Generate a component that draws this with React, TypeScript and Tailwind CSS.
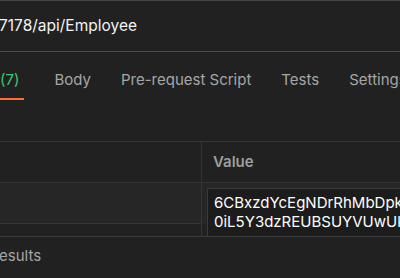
import React from 'react';

const tabs = ['Body', 'Pre-request Script', 'Tests', 'Settings'];

const App = () => {
  return (
    <div
      className="w-[400px] h-[278px] overflow-hidden bg-[#212121] border-t border-[#444444] flex flex-col"
      style={{ fontFamily: 'Inter, "Noto Sans", sans-serif' }}
    >
      {/* URL bar */}
      <div className="h-[50px] shrink-0 flex items-center whitespace-nowrap">
        <span className="text-[15.5px] text-[#f2f2f2] -ml-px">7178/api/Employee</span>
      </div>
      <div className="h-px shrink-0 bg-[#4d4d4d]" />

      {/* Request tabs */}
      <div className="h-[48px] shrink-0 flex items-stretch gap-[30px] whitespace-nowrap text-[15px]">
        <div className="relative flex items-center pr-[5px] pt-[9px]">
          <span className="text-[#3ec77a]">(7)</span>
          <div className="absolute left-0 right-0 bottom-0 h-[2px] bg-[#ff6c37]" />
        </div>
        {tabs.map((tab) => (
          <div key={tab} className="flex items-center pt-[9px] text-[#a6a6a6]">
            {tab}
          </div>
        ))}
      </div>

      <div className="h-[41px] shrink-0" />

      {/* Params table */}
      <div className="h-[95px] shrink-0 border-t border-[#353535] flex overflow-hidden">
        <div className="w-[201px] shrink-0 flex flex-col">
          <div className="h-[41px] shrink-0 border-b border-[#353535]" />
          <div className="h-[41px] shrink-0 bg-[#262626] border-b border-[#353535]" />
          <div className="h-[10px] shrink-0" />
        </div>
        <div className="w-px shrink-0 bg-[#353535]" />
        <div className="flex-1 flex flex-col min-w-0">
          <div className="h-[41px] shrink-0 border-b border-[#353535] flex items-center pl-[11px]">
            <span className="text-[15px] font-semibold text-[#9e9e9e]">Value</span>
          </div>
          <div className="h-[41px] shrink-0 bg-[#262626] pl-[5px] pt-[5px]">
            <div className="w-[240px] border border-[#3a3a3a] bg-[#1c1c1c] pl-[6px] pt-[4px] pb-[8px] text-[15px] leading-[19px] text-[#ffffff] whitespace-nowrap">
              <div>6CBxzdYcEgNDrRhMbDpk</div>
              <div>0iL5Y3dzREUBSUYVUwUk</div>
            </div>
          </div>
        </div>
      </div>

      {/* Response tabs */}
      <div className="h-px shrink-0 bg-[#3a3a3a]" />
      <div className="flex-1 flex items-center whitespace-nowrap">
        <span className="text-[15px] text-[#a6a6a6] -ml-px -mt-[2px]">esults</span>
      </div>
    </div>
  );
};

export default App;
